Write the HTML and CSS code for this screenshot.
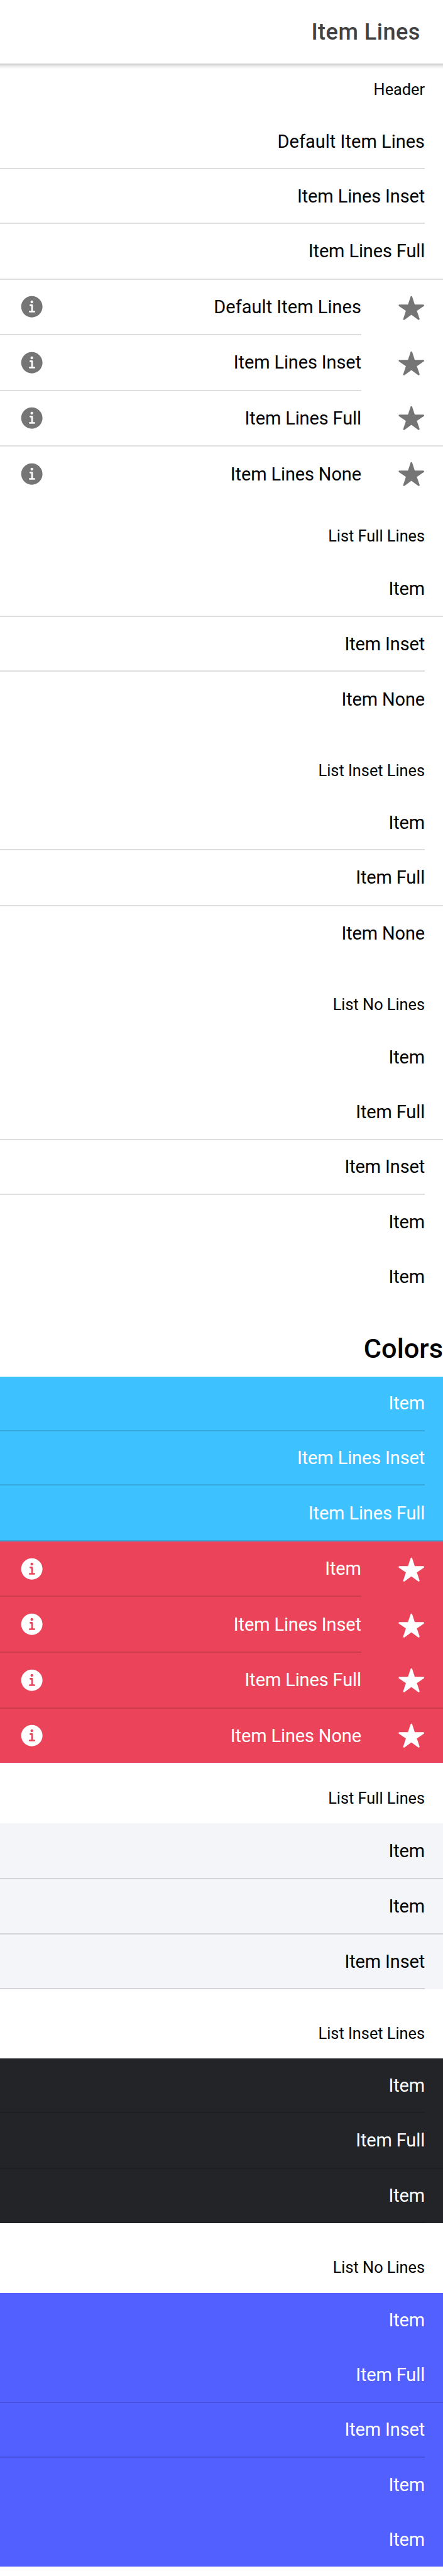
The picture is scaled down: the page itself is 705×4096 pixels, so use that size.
FILE: index.html
```html
<!DOCTYPE html>
<html lang="en">
<head>
<meta charset="utf-8">
<title>Item Lines</title>
<link rel="stylesheet" href="styles.css">
</head>
<body>
<svg class="defs" aria-hidden="true">
  <symbol id="info" viewBox="0 0 512 512"><path d="M256 56C145.72 56 56 145.72 56 256s89.72 200 200 200 200-89.72 200-200S366.28 56 256 56zm0 82a26 26 0 11-26 26 26 26 0 0126-26zm48 226h-88a16 16 0 010-32h28v-88h-16a16 16 0 010-32h32a16 16 0 0116 16v104h28a16 16 0 010 32z"/></symbol>
  <symbol id="star" viewBox="0 0 512 512"><path d="M394 480a16 16 0 01-9.39-3L256 383.76 127.39 477a16 16 0 01-24.55-18.08L153 310.35 23 221.2a16 16 0 019-29.2h160.38l48.4-148.95a16 16 0 0130.44 0l48.4 149H480a16 16 0 019.05 29.2L359 310.35l50.13 148.53A16 16 0 01394 480z"/></symbol>
</svg>
<header class="toolbar"><h1 class="title">Item Lines</h1></header>
<main>
  <section class="list flush">
    <div class="list-header">Header</div>
    <div class="item inset"><div class="inner"><div class="content"><span class="wide">Default Item Lines</span></div></div></div>
    <div class="item inset"><div class="inner"><div class="content"><span>Item Lines Inset</span></div></div></div>
    <div class="item full"><div class="inner"><div class="content"><span>Item Lines Full</span></div></div></div>
    <div class="item icons inset"><div class="inner"><div class="content"><svg class="icon"><use href="#info"/></svg><span class="wide">Default Item Lines</span></div></div><svg class="icon star"><use href="#star"/></svg></div>
    <div class="item icons inset"><div class="inner"><div class="content"><svg class="icon"><use href="#info"/></svg><span>Item Lines Inset</span></div></div><svg class="icon star"><use href="#star"/></svg></div>
    <div class="item icons full"><div class="inner"><div class="content"><svg class="icon"><use href="#info"/></svg><span>Item Lines Full</span></div></div><svg class="icon star"><use href="#star"/></svg></div>
    <div class="item icons"><div class="inner"><div class="content"><svg class="icon"><use href="#info"/></svg><span>Item Lines None</span></div></div><svg class="icon star"><use href="#star"/></svg></div>
  </section>
  <section class="list">
    <div class="list-header">List Full Lines</div>
    <div class="item full"><div class="inner"><div class="content"><span>Item</span></div></div></div>
    <div class="item inset"><div class="inner"><div class="content"><span>Item Inset</span></div></div></div>
    <div class="item"><div class="inner"><div class="content"><span>Item None</span></div></div></div>
  </section>
  <section class="list">
    <div class="list-header">List Inset Lines</div>
    <div class="item inset"><div class="inner"><div class="content"><span>Item</span></div></div></div>
    <div class="item full"><div class="inner"><div class="content"><span>Item Full</span></div></div></div>
    <div class="item"><div class="inner"><div class="content"><span>Item None</span></div></div></div>
  </section>
  <section class="list">
    <div class="list-header">List No Lines</div>
    <div class="item"><div class="inner"><div class="content"><span>Item</span></div></div></div>
    <div class="item full"><div class="inner"><div class="content"><span>Item Full</span></div></div></div>
    <div class="item inset"><div class="inner"><div class="content"><span>Item Inset</span></div></div></div>
    <div class="item"><div class="inner"><div class="content"><span>Item</span></div></div></div>
    <div class="item"><div class="inner"><div class="content"><span>Item</span></div></div></div>
  </section>
  <h2 class="section-title">Colors</h2>
  <section class="list flush">
    <div class="group info">
      <div class="item inset"><div class="inner"><div class="content"><span>Item</span></div></div></div>
      <div class="item inset"><div class="inner"><div class="content"><span>Item Lines Inset</span></div></div></div>
      <div class="item full"><div class="inner"><div class="content"><span>Item Lines Full</span></div></div></div>
    </div>
    <div class="group danger">
      <div class="item icons inset"><div class="inner"><div class="content"><svg class="icon"><use href="#info"/></svg><span>Item</span></div></div><svg class="icon star"><use href="#star"/></svg></div>
      <div class="item icons inset"><div class="inner"><div class="content"><svg class="icon"><use href="#info"/></svg><span>Item Lines Inset</span></div></div><svg class="icon star"><use href="#star"/></svg></div>
      <div class="item icons full"><div class="inner"><div class="content"><svg class="icon"><use href="#info"/></svg><span>Item Lines Full</span></div></div><svg class="icon star"><use href="#star"/></svg></div>
      <div class="item icons"><div class="inner"><div class="content"><svg class="icon"><use href="#info"/></svg><span>Item Lines None</span></div></div><svg class="icon star"><use href="#star"/></svg></div>
    </div>
  </section>
  <section class="list">
    <div class="list-header">List Full Lines</div>
    <div class="group light">
      <div class="item full"><div class="inner"><div class="content"><span>Item</span></div></div></div>
      <div class="item full"><div class="inner"><div class="content"><span>Item</span></div></div></div>
      <div class="item inset"><div class="inner"><div class="content"><span>Item Inset</span></div></div></div>
    </div>
  </section>
  <section class="list">
    <div class="list-header">List Inset Lines</div>
    <div class="group dark">
      <div class="item inset"><div class="inner"><div class="content"><span>Item</span></div></div></div>
      <div class="item full"><div class="inner"><div class="content"><span>Item Full</span></div></div></div>
      <div class="item inset"><div class="inner"><div class="content"><span>Item</span></div></div></div>
    </div>
  </section>
  <section class="list">
    <div class="list-header">List No Lines</div>
    <div class="group secondary">
      <div class="item"><div class="inner"><div class="content"><span>Item</span></div></div></div>
      <div class="item full"><div class="inner"><div class="content"><span>Item Full</span></div></div></div>
      <div class="item inset"><div class="inner"><div class="content"><span>Item Inset</span></div></div></div>
      <div class="item"><div class="inner"><div class="content"><span>Item</span></div></div></div>
      <div class="item"><div class="inner"><div class="content"><span>Item</span></div></div></div>
    </div>
  </section>
</main>
</body>
</html>
```
FILE: styles.css
```css
:root {
  --u: 0.60254px;
}

* {
  box-sizing: border-box;
}

html,
body {
  margin: 0;
  background: #fff;
}

body {
  width: 705px;
  height: 4096px;
  overflow: hidden;
  color: #000;
  font-family: Roboto, "Liberation Sans", sans-serif;
  font-size: calc(48 * var(--u));
}

.defs {
  display: none;
}

.toolbar {
  position: relative;
  display: flex;
  align-items: center;
  justify-content: flex-end;
  height: calc(168 * var(--u));
  padding-right: calc(60 * var(--u));
}

/* soft shadow that falls over the content below the toolbar */
.toolbar::after {
  content: "";
  position: absolute;
  top: 100%;
  left: 0;
  right: 0;
  height: calc(15 * var(--u));
  background: linear-gradient(#cecece, #d8d8d8 20%, #efefef 55%, #fbfbfb 85%, #fff);
}

.title {
  margin: 0;
  color: #424242;
  font-size: calc(60 * var(--u));
  font-weight: 500;
  letter-spacing: 0.0125em;
}

.list {
  padding: calc(24 * var(--u)) 0;
}

.list.flush {
  padding: 0;
}

.list-header {
  display: flex;
  align-items: center;
  justify-content: flex-end;
  height: calc(135 * var(--u));
  padding: calc(2 * var(--u)) calc(48 * var(--u)) 0 0;
  font-size: calc(42 * var(--u));
}

.section-title {
  margin: calc(54 * var(--u)) 0 calc(30 * var(--u));
  font-size: calc(72 * var(--u));
  line-height: calc(84 * var(--u));
  font-weight: 500;
  text-align: right;
}

.item {
  display: flex;
  flex-wrap: wrap;
  align-content: flex-start;
  height: calc(144 * var(--u));
  padding-right: calc(48 * var(--u));
  letter-spacing: -0.1px;
}

.wide {
  letter-spacing: 0.05px;
}

.inner {
  display: flex;
  flex: 1;
  flex-direction: column;
  height: calc(144 * var(--u));
}

.content {
  display: flex;
  flex: 1;
  align-items: center;
  justify-content: flex-end;
}

.item.full,
.item.icons.inset {
  height: calc(147 * var(--u));
}

.icons.inset .inner {
  height: calc(147 * var(--u));
}

/* a whole pixel height keeps every divider equally thick */
.inset .inner::after,
.full::after {
  content: "";
  height: 2px;
  background: rgba(0, 0, 0, 0.13);
}

/* reaches across the item's end padding */
.full::after {
  flex: 0 0 705px;
  margin-top: -0.19px;
  margin-right: calc(-48 * var(--u));
}

.icon {
  width: calc(72 * var(--u));
  height: calc(72 * var(--u));
  fill: #757575;
}

.content .icon {
  margin: 0 auto 0 calc(48 * var(--u));
}

.star {
  margin: calc(36 * var(--u)) 0 0 calc(96 * var(--u));
}

.inset .star {
  margin-top: calc(38.5 * var(--u));
}

.group {
  color: #fff;
}

.group .icon {
  fill: #fff;
}

.info {
  background: #3dc2ff;
}

.danger {
  background: #eb445a;
}

.light {
  background: #f4f5f8;
  color: #000;
}

.dark {
  background: #222428;
}

.secondary {
  background: #5260ff;
}
```
